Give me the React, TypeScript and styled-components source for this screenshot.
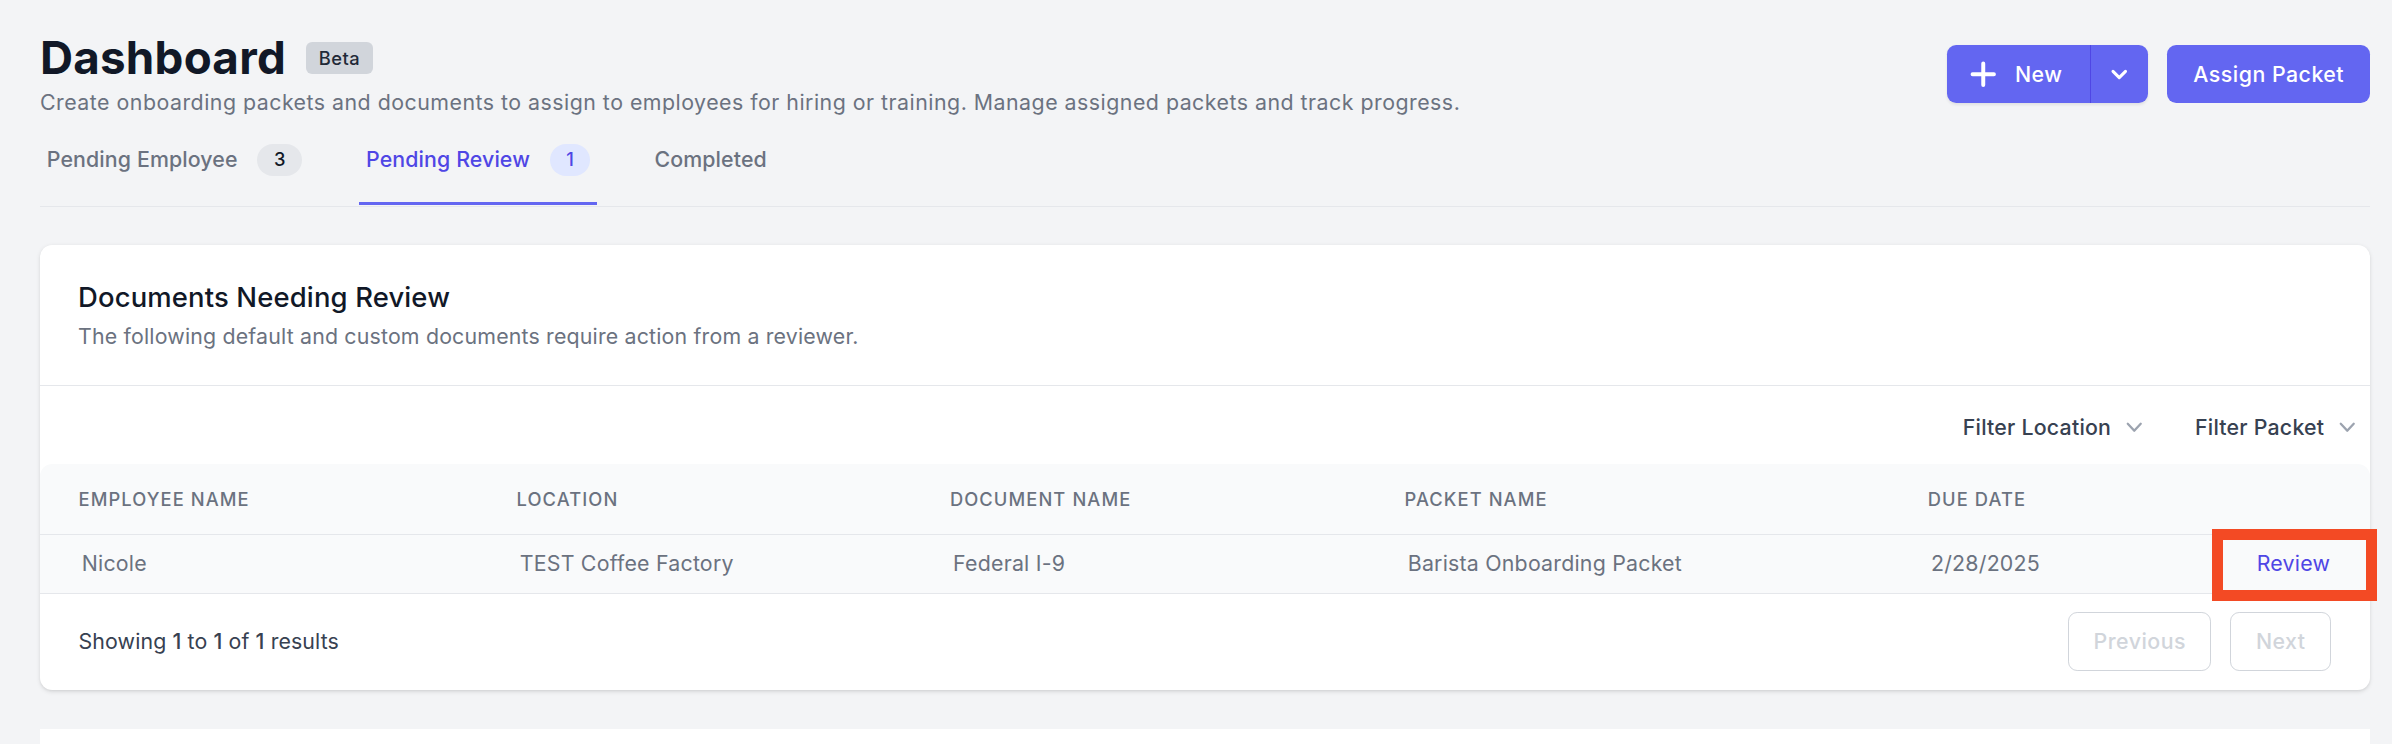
import * as React from "react";
import styled, { createGlobalStyle } from "styled-components";

const GlobalStyle = createGlobalStyle`
  * {
    box-sizing: border-box;
  }

  html,
  body {
    margin: 0;
    padding: 0;
    height: 100%;
    overflow: hidden;
    background: #f3f4f6;
  }

  body {
    font-family: Inter, "Noto Sans", "Liberation Sans", sans-serif;
    color: #111827;
    letter-spacing: 0.02em;
    -webkit-font-smoothing: antialiased;
  }

  button {
    letter-spacing: inherit;
  }
`;

const PlusIcon: React.VFC = () => (
  <svg width="20" height="20" viewBox="0 0 20 20" fill="none">
    <path d="M10 3v14M3 10h14" stroke="currentColor" strokeWidth="2.6" strokeLinecap="round" />
  </svg>
);

const ToggleChevron: React.VFC = () => (
  <svg width="20" height="20" viewBox="0 0 20 20" fill="none">
    <path
      d="M5.9 8.1 10 12.2l4.1-4.1"
      stroke="currentColor"
      strokeWidth="2"
      strokeLinecap="round"
      strokeLinejoin="round"
    />
  </svg>
);

const FilterChevron: React.VFC = () => (
  <svg width="20" height="20" viewBox="0 0 20 20" fill="currentColor">
    <path
      fillRule="evenodd"
      d="M5.23 7.21a.75.75 0 011.06.02L10 11.168l3.71-3.938a.75.75 0 111.08 1.04l-4.25 4.5a.75.75 0 01-1.08 0l-4.25-4.5a.75.75 0 01.02-1.06z"
      clipRule="evenodd"
    />
  </svg>
);

const tabs = [
  { label: "Pending Employee", count: 3, active: false },
  { label: "Pending Review", count: 1, active: true },
  { label: "Completed", count: null, active: false },
];

const columns = ["Employee Name", "Location", "Document Name", "Packet Name", "Due Date"];

const rows = [
  {
    employee: "Nicole",
    location: "TEST Coffee Factory",
    document: "Federal I-9",
    packet: "Barista Onboarding Packet",
    due: "2/28/2025",
  },
];

export default function App() {
  return (
    <>
      <GlobalStyle />
      <StyledPage>
        <StyledHeader>
          <div>
            <StyledTitleRow>
              <StyledTitle>Dashboard</StyledTitle>
              <StyledBeta>Beta</StyledBeta>
            </StyledTitleRow>
            <StyledDescription>
              Create onboarding packets and documents to assign to employees for hiring or training.
              Manage assigned packets and track progress.
            </StyledDescription>
          </div>
          <StyledActions>
            <StyledSplitButton>
              <StyledSplitMain>
                <PlusIcon />
                New
              </StyledSplitMain>
              <StyledSplitToggle>
                <ToggleChevron />
              </StyledSplitToggle>
            </StyledSplitButton>
            <StyledPrimaryButton>Assign Packet</StyledPrimaryButton>
          </StyledActions>
        </StyledHeader>

        <StyledTabNav>
          {tabs.map((tab) => (
            <StyledTab key={tab.label} $active={tab.active}>
              {tab.label}
              {tab.count !== null && <StyledCount $active={tab.active}>{tab.count}</StyledCount>}
            </StyledTab>
          ))}
        </StyledTabNav>

        <StyledCard>
          <StyledCardHeader>
            <StyledCardTitle>Documents Needing Review</StyledCardTitle>
            <StyledCardSubtitle>
              The following default and custom documents require action from a reviewer.
            </StyledCardSubtitle>
          </StyledCardHeader>

          <StyledFilterBar>
            <StyledFilterButton>
              Filter Location
              <FilterChevron />
            </StyledFilterButton>
            <StyledFilterButton>
              Filter Packet
              <FilterChevron />
            </StyledFilterButton>
          </StyledFilterBar>

          <StyledHeadRow>
            {columns.map((col) => (
              <StyledHeadCell key={col}>{col}</StyledHeadCell>
            ))}
            <StyledHeadCell />
          </StyledHeadRow>
          {rows.map((row) => (
            <StyledBodyRow key={row.employee}>
              <StyledCell>{row.employee}</StyledCell>
              <StyledCell>{row.location}</StyledCell>
              <StyledCell>{row.document}</StyledCell>
              <StyledCell>{row.packet}</StyledCell>
              <StyledCell>{row.due}</StyledCell>
              <StyledCell>
                <StyledReviewLink>Review</StyledReviewLink>
              </StyledCell>
            </StyledBodyRow>
          ))}

          <StyledFooter>
            <StyledResults>
              Showing <strong>1</strong> to <strong>1</strong> of <strong>1</strong> results
            </StyledResults>
            <StyledPager>
              <StyledPagerButton disabled>Previous</StyledPagerButton>
              <StyledPagerButton disabled>Next</StyledPagerButton>
            </StyledPager>
          </StyledFooter>
        </StyledCard>

        <StyledNextCard />
      </StyledPage>
    </>
  );
}

const StyledPage = styled.div`
  zoom: 1.5255;
  padding: 20px 14.4px 0 26.2px;
`;

const StyledHeader = styled.header`
  display: flex;
  align-items: center;
  justify-content: space-between;
`;

const StyledTitleRow = styled.div`
  display: flex;
  align-items: center;
`;

const StyledTitle = styled.h1`
  margin: 0;
  font-size: 30px;
  line-height: 36px;
  font-weight: 700;
  letter-spacing: 0.005em;
  color: #111827;
`;

const StyledBeta = styled.span`
  margin-left: 13px;
  padding: 2.4px 8.5px;
  border-radius: 4px;
  background: #d1d5db;
  color: #1f2937;
  font-size: 12px;
  line-height: 16px;
  font-weight: 500;
`;

const StyledDescription = styled.p`
  margin: 1px 0 0;
  font-size: 14px;
  line-height: 20px;
  color: #6b7280;
`;

const StyledActions = styled.div`
  display: flex;
  align-items: center;
  gap: 12.5px;
`;

const StyledSplitButton = styled.div`
  display: flex;
  height: 38.3px;
  border-radius: 6px;
  overflow: hidden;
  background: #6366f1;
  color: #fff;
  box-shadow: 0 1px 2px rgba(0, 0, 0, 0.08);
`;

const StyledSplitMain = styled.button`
  display: flex;
  align-items: center;
  gap: 11px;
  padding: 0 18px 0 13.6px;
  border: none;
  border-right: 1px solid #4f46e5;
  background: none;
  color: inherit;
  font: 500 14px/20px Inter, "Noto Sans", sans-serif;
`;

const StyledSplitToggle = styled.button`
  display: flex;
  align-items: center;
  justify-content: center;
  width: 37.7px;
  padding: 0;
  border: none;
  background: none;
  color: inherit;
`;

const StyledPrimaryButton = styled.button`
  height: 38.3px;
  padding: 0 17px;
  border: none;
  border-radius: 6px;
  background: #6366f1;
  color: #fff;
  font: 500 14px/20px Inter, "Noto Sans", sans-serif;
`;

const StyledTabNav = styled.nav`
  display: flex;
  gap: 33px;
  margin-top: 17px;
  padding-bottom: 1px;
  border-bottom: 1px solid #e5e7eb;
`;

const StyledTab = styled.a<{ $active: boolean }>`
  display: flex;
  align-items: center;
  height: 40.2px;
  padding: 0 4.5px 17px;
  border-bottom: 2px solid ${(p) => (p.$active ? "#6366f1" : "transparent")};
  color: ${(p) => (p.$active ? "#4f46e5" : "#6b7280")};
  font-size: 14px;
  line-height: 20px;
  font-weight: 500;
  letter-spacing: 0.005em;
`;

const StyledCount = styled.span<{ $active: boolean }>`
  margin-left: 13px;
  padding: 2.5px 10.8px;
  border-radius: 999px;
  background: ${(p) => (p.$active ? "#e0e7ff" : "#e5e7eb")};
  color: ${(p) => (p.$active ? "#4f46e5" : "#111827")};
  font-size: 12px;
  line-height: 16px;
  font-weight: 500;
`;

const StyledCard = styled.section`
  margin-top: 25px;
  border-radius: 8px;
  background: #fff;
  box-shadow: 0 1px 3px 0 rgba(0, 0, 0, 0.1), 0 1px 2px -1px rgba(0, 0, 0, 0.1);
`;

const StyledCardHeader = styled.div`
  padding: 20.4px 25px 22px;
  border-bottom: 1px solid #e5e7eb;
`;

const StyledCardTitle = styled.h3`
  margin: 0;
  font-size: 18px;
  line-height: 28px;
  font-weight: 500;
  letter-spacing: 0.005em;
  color: #111827;
`;

const StyledCardSubtitle = styled.p`
  margin: 1.4px 0 0;
  font-size: 14px;
  line-height: 20px;
  letter-spacing: 0.008em;
  color: #6b7280;
`;

const StyledFilterBar = styled.div`
  display: flex;
  justify-content: flex-end;
  gap: 30px;
  padding: 16.5px 5px 14.3px;
`;

const StyledFilterButton = styled.button`
  display: flex;
  align-items: center;
  gap: 5px;
  padding: 0;
  border: none;
  background: none;
  color: #374151;
  font: 500 14px/20px Inter, "Noto Sans", sans-serif;
  letter-spacing: 0.01em;

  svg {
    color: #9ca3af;
  }
`;

const StyledHeadRow = styled.div`
  display: grid;
  grid-template-columns: 287.1px 284.1px 298px 343px 1fr auto;
  padding: 15.5px 26.2px 14.3px 25.3px;
  border-radius: 8px 8px 0 0;
  border-bottom: 1px solid #e5e7eb;
  background: #f9fafb;
`;

const StyledHeadCell = styled.div`
  font-size: 12px;
  line-height: 16px;
  font-weight: 500;
  letter-spacing: 0.06em;
  text-transform: uppercase;
  color: #6b7280;
`;

const StyledBodyRow = styled.div`
  display: grid;
  grid-template-columns: 287.1px 284.1px 298px 343px 1fr auto;
  padding: 9px 26.2px 9px 27.4px;
  border-bottom: 1px solid #e5e7eb;
  background: #f9fafb;
`;

const StyledCell = styled.div`
  font-size: 14px;
  line-height: 20px;
  letter-spacing: 0.01em;
  color: #6b7280;
`;

const StyledReviewLink = styled.a`
  position: relative;
  display: inline-block;
  color: #4f46e5;

  &::after {
    content: "";
    position: absolute;
    top: -12.8px;
    bottom: -14.2px;
    left: -29.5px;
    right: -30.6px;
    border: 7.8px solid #f34a24;
    pointer-events: none;
  }
`;

const StyledFooter = styled.div`
  display: flex;
  align-items: center;
  justify-content: space-between;
  padding: 12px 25.6px 12.4px 25.3px;
`;

const StyledResults = styled.p`
  margin: 0;
  font-size: 14px;
  line-height: 20px;
  letter-spacing: 0.005em;
  color: #374151;

  strong {
    font-weight: 500;
  }
`;

const StyledPager = styled.div`
  display: flex;
  gap: 12.5px;
`;

const StyledPagerButton = styled.button`
  height: 39px;
  padding: 0 16px;
  border: 1px solid #d1d5db;
  border-radius: 6px;
  background: #fff;
  color: #d1d5db;
  font: 500 14px/20px Inter, "Noto Sans", sans-serif;
`;

const StyledNextCard = styled.div`
  height: 300px;
  margin-top: 25.6px;
  background: #fff;
`;
